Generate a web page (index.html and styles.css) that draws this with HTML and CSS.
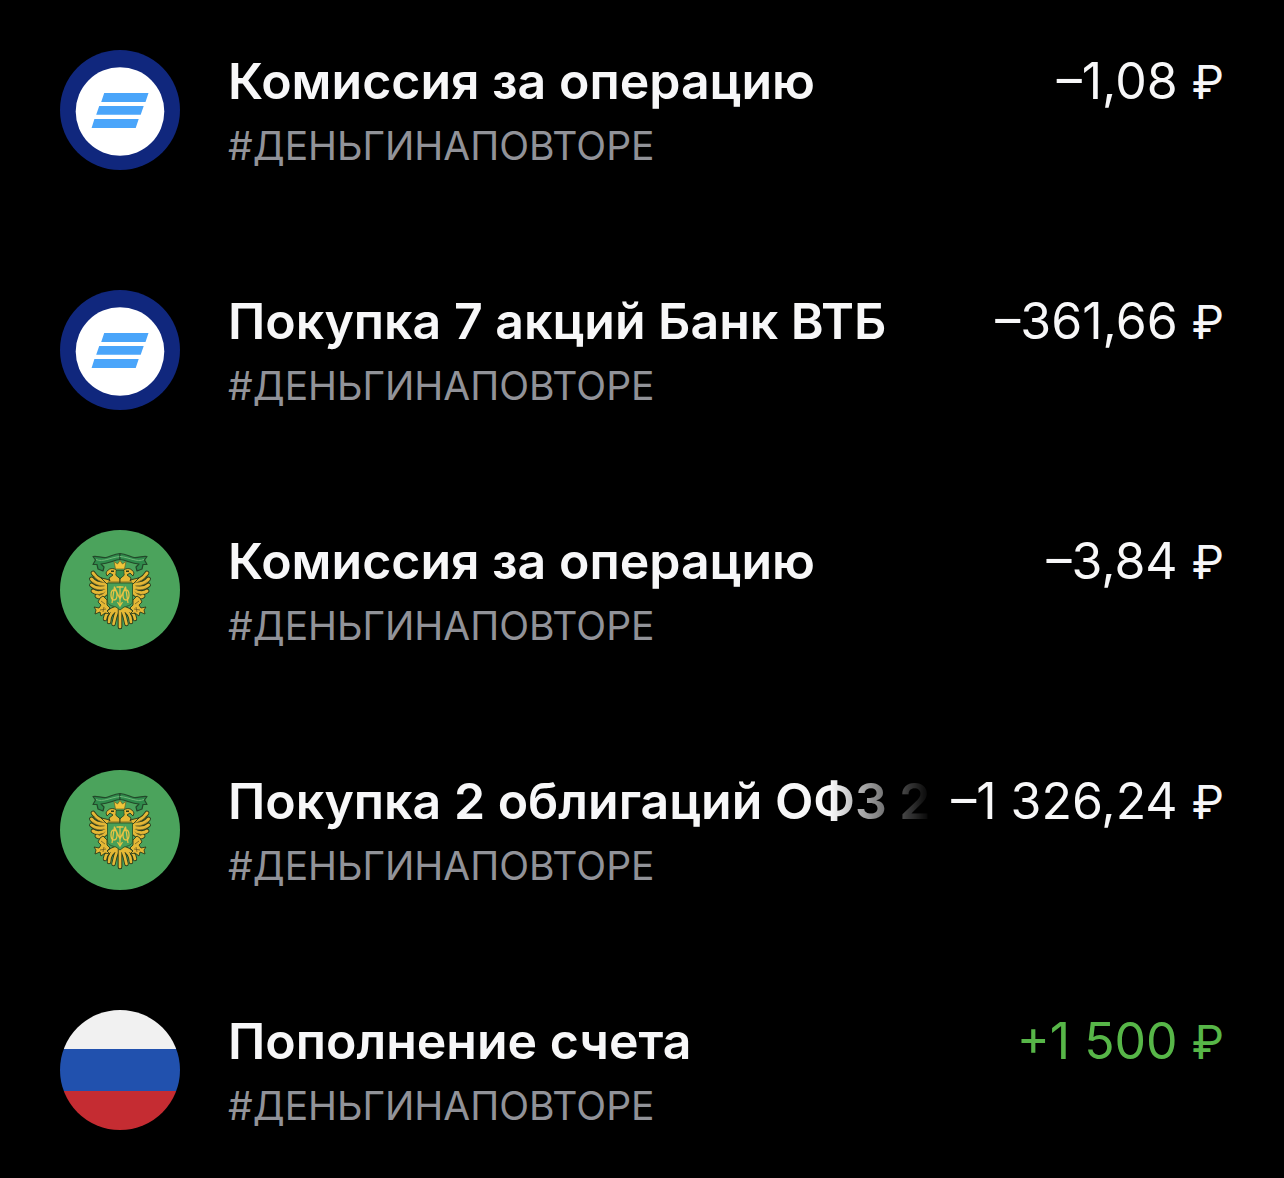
FILE: index.html
```html
<!DOCTYPE html>
<html lang="ru">
<head>
<meta charset="UTF-8">
<title>История операций</title>
<meta name="viewport" content="width=device-width,initial-scale=1.0">
<link rel="stylesheet" href="styles.css">
</head>
<body>
<svg class="sprite" aria-hidden="true">
  <symbol id="vtb" viewBox="0 0 120 120">
    <circle cx="60" cy="60" r="60" fill="#10277d"/>
    <circle cx="60" cy="61.500" r="44.300" fill="#fff"/>
    <path fill="#4aa5fa" d="M44.200 43H88.500L85.500 52H41.200zM39.200 56H83.700L80.700 64.800H36.200zM34.400 69H78.700L75.700 78H31.600z"/>
  </symbol>
  <!-- left half of the eagle, mirrored below -->
  <symbol id="half" viewBox="0 0 120 120">
    <path fill="#2f8a4b" stroke="#23482a" stroke-width="1.200" stroke-linejoin="round" d="M60 23.500C55 24 51 26 46 27.500C41 28 37 25.500 33 26.500L35.500 30L33 34.500L37 34.500L38 39L43 41L44 37L41 34C49 33.500 54 30 60 29.500z"/>
    <path fill="none" stroke="#6fb878" stroke-width="1" d="M36 29.500C43 32.500 50 27.500 60 26.500"/>
    <g fill="none" stroke-linecap="round">
      <path stroke="#2b3d1b" stroke-width="4.800" d="M49 52Q38 51 33 43M47 54Q36 55 31.500 49M47 57Q37 60 31.500 55M47 60Q38 65 33 61M47 62Q41 69 37 66"/>
      <path stroke="#e5b836" stroke-width="3" d="M49 52Q38 51 33 43M47 54Q36 55 31.500 49M47 57Q37 60 31.500 55M47 60Q38 65 33 61M47 62Q41 69 37 66"/>
      <path stroke="#8f792c" stroke-width=".7" d="M46 53Q38 52 34 46M44 56Q37 56 33 52M44 59Q38 61 34 58M45 62Q41 66 37 64"/>
      <path stroke="#2b3d1b" stroke-width="4.400" d="M60 79V97M58 79Q55 86 53.500 94M57 79Q49 83 49 92M56 78Q46 81 45 89"/>
      <path stroke="#e5b836" stroke-width="2.700" d="M60 79V97M58 79Q55 86 53.500 94M57 79Q49 83 49 92M56 78Q46 81 45 89"/>
    </g>
    <g fill="#e5b836" stroke="#2b3d1b" stroke-width=".9" stroke-linejoin="round">
      <path d="M40 68L43 66L47 70L47 75L50 78L47 81L50 84L45 83L41 86L40 82L35 84L36 80L34 77L39 78L41 75L38 72z"/>
      <path d="M41 48L48 49.500L50 51L49 48L53 45L50 43L47 46L46 43C48 38 54 37 57 41L56 45L60 49V54H47z"/>
    </g>
    <path fill="none" stroke="#6d5d22" stroke-width=".8" d="M41 71L45 74M40 80L46 79M44 77L43 82M48 52H60"/>
    <path fill="#2b3d1b" d="M51 40.500h3V42h-3z"/>
  </symbol>
  <symbol id="ofz" viewBox="0 0 120 120">
    <circle cx="60" cy="60" r="60" fill="#4ba35c"/>
    <use href="#half" width="120" height="120"/>
    <g transform="matrix(-1 0 0 1 120 0)"><use href="#half" width="120" height="120"/></g>
    <path fill="#f1c63b" stroke="#6d611e" stroke-width=".7" d="M55.500 39L54 31.500L57.500 34L60 30.500L62.500 34L66 31.500L64.500 39z"/>
    <path fill="#38914e" stroke="#285028" stroke-width=".7" d="M56 40.500H64V45.500L60 48.500L56 45.500z"/>
    <path fill="#48a058" stroke="#315f2d" stroke-width="1" d="M47.500 53H72.500V71C72.500 75 68 76 64 77L60 80L56 77C52 76 47.500 75 47.500 71z"/>
    <path fill="none" stroke="#e7c342" stroke-width="1.300" d="M54.500 56.500L52 73M65.500 56.500L68 73M54.500 57L60 69L65.500 57M60 56V76M56.500 57H63.500M54 60C50 60 50 70 54 70C58 70 58 60 54 60M66 60C62 60 62 70 66 70C70 70 70 60 66 60M57.500 72L60 76L62.500 72"/>
  </symbol>
  <symbol id="rub" viewBox="0 0 120 120">
    <clipPath id="round"><circle cx="60" cy="60" r="60"/></clipPath>
    <g clip-path="url(#round)">
      <path fill="#f1f1f1" d="M0 0h120v39H0z"/>
      <path fill="#2151ae" d="M0 39h120v42H0z"/>
      <path fill="#c52c32" d="M0 81h120v39H0z"/>
    </g>
  </symbol>
</svg>

<ul class="operations">
  <li class="operation">
    <svg class="logo" aria-hidden="true"><use href="#vtb"/></svg>
    <div class="info">
      <div class="line">
        <span class="title">Комиссия за операцию</span>
        <span class="amount">–1,08 <span class="currency">₽</span></span>
      </div>
      <div class="account">#ДЕНЬГИНАПОВТОРЕ</div>
    </div>
  </li>
  <li class="operation">
    <svg class="logo" aria-hidden="true"><use href="#vtb"/></svg>
    <div class="info">
      <div class="line">
        <span class="title">Покупка 7 акций Банк ВТБ</span>
        <span class="amount">–361,66 <span class="currency">₽</span></span>
      </div>
      <div class="account">#ДЕНЬГИНАПОВТОРЕ</div>
    </div>
  </li>
  <li class="operation">
    <svg class="logo" aria-hidden="true"><use href="#ofz"/></svg>
    <div class="info">
      <div class="line">
        <span class="title">Комиссия за операцию</span>
        <span class="amount">–3,84 <span class="currency">₽</span></span>
      </div>
      <div class="account">#ДЕНЬГИНАПОВТОРЕ</div>
    </div>
  </li>
  <li class="operation">
    <svg class="logo" aria-hidden="true"><use href="#ofz"/></svg>
    <div class="info">
      <div class="line">
        <span class="title fade">Покупка 2 облигаций ОФЗ 2</span>
        <span class="amount">–1 326,24 <span class="currency">₽</span></span>
      </div>
      <div class="account">#ДЕНЬГИНАПОВТОРЕ</div>
    </div>
  </li>
  <li class="operation">
    <svg class="logo" aria-hidden="true"><use href="#rub"/></svg>
    <div class="info">
      <div class="line">
        <span class="title">Пополнение счета</span>
        <span class="amount plus">+1 500 <span class="currency">₽</span></span>
      </div>
      <div class="account">#ДЕНЬГИНАПОВТОРЕ</div>
    </div>
  </li>
</ul>
</body>
</html>
```

FILE: styles.css
```css
* {
  margin: 0;
  padding: 0;
  box-sizing: border-box;
}
body {
  background-color: #000;
  color: #f7f7f8;
  font-family: Inter, "Liberation Sans", sans-serif;
}
li {
  list-style-type: none;
}
.sprite {
  display: block;
  width: 0;
  height: 0;
}
.operations {
  display: flex;
  flex-direction: column;
  gap: 110px;
  padding: 50px 60px 38px;
}
.operation {
  display: flex;
  gap: 48px;
}
.logo {
  flex: none;
  width: 120px;
  height: 120px;
}
.info {
  flex: 1;
  min-width: 0;
}
.line {
  display: flex;
  justify-content: space-between;
  gap: 20px;
  font-size: 50px;
  line-height: 62px;
  white-space: nowrap;
}
.title {
  min-width: 0;
  overflow: hidden;
  font-weight: 600;
}
/* long titles dissolve before the amount */
.fade {
  -webkit-mask-image: linear-gradient(to left, transparent, #000 100px);
          mask-image: linear-gradient(to left, transparent, #000 100px);
}
.amount {
  flex: none;
  font-weight: 400;
}
.currency {
  font-size: 46px;
  line-height: 1;
}
.plus {
  color: #57b648;
}
.account {
  color: #919298;
  font-size: 39px;
  line-height: 68px;
}
```
